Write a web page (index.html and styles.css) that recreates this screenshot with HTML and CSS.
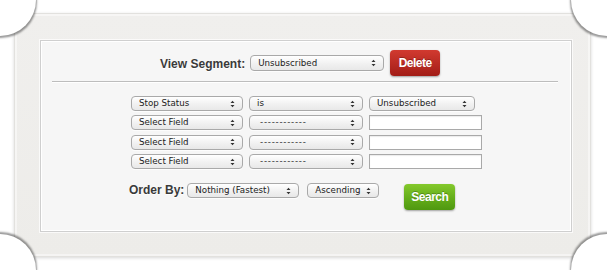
FILE: index.html
```html
<!DOCTYPE html>
<html>
<head>
<meta charset="utf-8">
<link rel="stylesheet" href="styles.css">
</head>
<body>
<div class="page">
  <div class="frame">
    <div class="panel">
      <div class="segment-row">
        <span class="label">View Segment:</span>
        <div class="sel sel-seg"><span>Unsubscribed</span><svg class="arr" width="5" height="8" viewBox="0 0 5 8"><path d="M0.5 3 L2.5 0.8 L4.5 3 Z M0.5 5 L2.5 7.2 L4.5 5 Z" fill="#333"/></svg></div>
        <button class="btn btn-red">Delete</button>
      </div>
      <div class="rule"></div>
      <div class="rows">
        <div class="row">
          <div class="sel c1"><span>Stop Status</span><svg class="arr" width="5" height="8" viewBox="0 0 5 8"><path d="M0.5 3 L2.5 0.8 L4.5 3 Z M0.5 5 L2.5 7.2 L4.5 5 Z" fill="#333"/></svg></div>
          <div class="sel c2"><span>is</span><svg class="arr" width="5" height="8" viewBox="0 0 5 8"><path d="M0.5 3 L2.5 0.8 L4.5 3 Z M0.5 5 L2.5 7.2 L4.5 5 Z" fill="#333"/></svg></div>
          <div class="sel c3"><span>Unsubscribed</span><svg class="arr" width="5" height="8" viewBox="0 0 5 8"><path d="M0.5 3 L2.5 0.8 L4.5 3 Z M0.5 5 L2.5 7.2 L4.5 5 Z" fill="#333"/></svg></div>
        </div>
        <div class="row">
          <div class="sel c1"><span>Select Field</span><svg class="arr" width="5" height="8" viewBox="0 0 5 8"><path d="M0.5 3 L2.5 0.8 L4.5 3 Z M0.5 5 L2.5 7.2 L4.5 5 Z" fill="#333"/></svg></div>
          <div class="sel c2"><span class="dash">------------</span><svg class="arr" width="5" height="8" viewBox="0 0 5 8"><path d="M0.5 3 L2.5 0.8 L4.5 3 Z M0.5 5 L2.5 7.2 L4.5 5 Z" fill="#333"/></svg></div>
          <div class="txt"></div>
        </div>
        <div class="row">
          <div class="sel c1"><span>Select Field</span><svg class="arr" width="5" height="8" viewBox="0 0 5 8"><path d="M0.5 3 L2.5 0.8 L4.5 3 Z M0.5 5 L2.5 7.2 L4.5 5 Z" fill="#333"/></svg></div>
          <div class="sel c2"><span class="dash">------------</span><svg class="arr" width="5" height="8" viewBox="0 0 5 8"><path d="M0.5 3 L2.5 0.8 L4.5 3 Z M0.5 5 L2.5 7.2 L4.5 5 Z" fill="#333"/></svg></div>
          <div class="txt"></div>
        </div>
        <div class="row">
          <div class="sel c1"><span>Select Field</span><svg class="arr" width="5" height="8" viewBox="0 0 5 8"><path d="M0.5 3 L2.5 0.8 L4.5 3 Z M0.5 5 L2.5 7.2 L4.5 5 Z" fill="#333"/></svg></div>
          <div class="sel c2"><span class="dash">------------</span><svg class="arr" width="5" height="8" viewBox="0 0 5 8"><path d="M0.5 3 L2.5 0.8 L4.5 3 Z M0.5 5 L2.5 7.2 L4.5 5 Z" fill="#333"/></svg></div>
          <div class="txt"></div>
        </div>
      </div>
      <div class="order-row">
        <span class="label label-order">Order By:</span>
        <div class="sel o1"><span>Nothing (Fastest)</span><svg class="arr" width="5" height="8" viewBox="0 0 5 8"><path d="M0.5 3 L2.5 0.8 L4.5 3 Z M0.5 5 L2.5 7.2 L4.5 5 Z" fill="#333"/></svg></div>
        <div class="sel o2"><span>Ascending</span><svg class="arr" width="5" height="8" viewBox="0 0 5 8"><path d="M0.5 3 L2.5 0.8 L4.5 3 Z M0.5 5 L2.5 7.2 L4.5 5 Z" fill="#333"/></svg></div>
        <button class="btn btn-green">Search</button>
      </div>
    </div>
  </div>
  <div class="corner tl"></div>
  <div class="corner tr"></div>
  <div class="corner bl"></div>
  <div class="corner br"></div>
</div>
</body>
</html>
```
FILE: styles.css
```css
* { box-sizing: border-box; }
html, body { margin: 0; padding: 0; background: #fff; }
body { font-family: "Liberation Sans", Arial, sans-serif; }

.page {
  position: relative;
  width: 607px;
  height: 270px;
  overflow: hidden;
  padding-top: 13px;
  padding-left: 14px;
  background: #fff;
}

.frame {
  width: 577px;
  height: 244px;
  background: linear-gradient(#f0efed, #edece9);
  border: 1px solid #e2e1de;
  box-shadow: 0 1px 3px rgba(0,0,0,0.16), inset 0 0 0 2px rgba(255,255,255,0.45);
  padding: 26px 17px 24px 25px;
}

.panel {
  width: 532px;
  height: 192px;
  background: #f6f6f6;
  border: 1px solid #cfcfcf;
  box-shadow: inset 0 0 0 1px #fff, 0 0 0 1px rgba(255,255,255,0.7);
  display: flex;
  flex-direction: column;
}

.label {
  font-weight: bold;
  font-size: 12px;
  color: #3a3a3a;
  text-shadow: 0 1px 0 #fff;
}

.segment-row {
  display: flex;
  align-items: center;
  padding-left: 119px;
  margin-top: 9px;
  height: 26px;
}
.segment-row .label { margin-right: 5px; margin-top: 1px; }

.sel {
  display: flex;
  align-items: center;
  justify-content: space-between;
  height: 15px;
  border: 1px solid #a9a9a9;
  border-radius: 4px;
  background: linear-gradient(#ffffff, #f1f1f1 55%, #e8e8e8);
  box-shadow: 0 1px 0 rgba(255,255,255,0.8);
  padding: 0 7px 0 7px;
  font-family: "DejaVu Sans", "Liberation Sans", sans-serif;
  font-size: 8.7px;
  color: #222;
  white-space: nowrap;
  overflow: hidden;
}
.sel span { line-height: 13px; }
.sel .dash { letter-spacing: 0.75px; padding-left: 3px; color: #333; }
.arr { flex: none; }

.sel-seg { width: 134px; height: 16px; margin-right: 6px; }

.btn {
  border: none;
  border-radius: 4px;
  color: #fff;
  font-family: "Liberation Sans", Arial, sans-serif;
  font-weight: bold;
  font-size: 12px;
  letter-spacing: -0.5px;
  padding: 0;
  text-shadow: 0 -1px 0 rgba(0,0,0,0.25);
  box-shadow: 0 1px 2px rgba(0,0,0,0.35);
}
.btn-red {
  width: 50px;
  height: 26px;
  background: linear-gradient(#d13a30, #b82a22 55%, #a21d17);
}
.btn-green {
  width: 51px;
  height: 26px;
  background: linear-gradient(#84c92c, #64ad1a 55%, #4f9810);
  margin-left: 25px;
  margin-top: 1px;
}

.rule {
  margin: 5px 13px 0 11px;
  height: 2px;
  border-top: 1px solid #bdbdbd;
  border-bottom: 1px solid #fff;
}

.rows {
  display: flex;
  flex-direction: column;
  gap: 4.4px;
  margin-top: 13px;
  padding-left: 90px;
}
.row {
  display: flex;
  gap: 6px;
  height: 15px;
}
.c1 { width: 112px; }
.c2 { width: 114px; }
.c3 { width: 106px; }
.txt {
  width: 113px;
  height: 15px;
  background: #fff;
  border: 1px solid #a9a9a9;
  box-shadow: inset 0 1px 1px rgba(0,0,0,0.08);
}

.order-row {
  display: flex;
  align-items: flex-start;
  margin-top: 14px;
  padding-left: 88px;
}
.label-order { margin-right: 3px; line-height: 15px; }
.o1 { width: 112px; margin-right: 8px; }
.o2 { width: 72px; }

.corner {
  position: absolute;
  width: 72px;
  height: 72px;
  border-radius: 50%;
  background: #fff;
}
.corner.tl { left: -36px; top: -36px; box-shadow: 1px 2px 2px rgba(0,0,0,0.4); }
.corner.tr { right: -36px; top: -36px; box-shadow: -1px 2px 2px rgba(0,0,0,0.4); }
.corner.bl { left: -36px; bottom: -36px; box-shadow: 1px -2px 2px rgba(0,0,0,0.4); }
.corner.br { right: -36px; bottom: -36px; box-shadow: -1px -2px 2px rgba(0,0,0,0.4); }
```
